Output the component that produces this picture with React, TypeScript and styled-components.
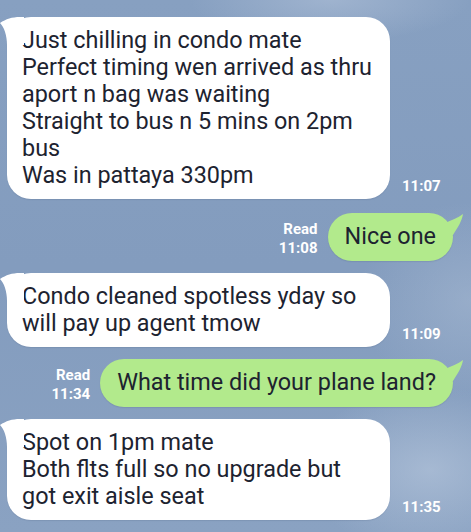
import React from "react";
import styled, { createGlobalStyle } from "styled-components";

const Global = createGlobalStyle`
  html, body { margin: 0; padding: 0; }
  body {
    width: 471px;
    height: 532px;
    overflow: hidden;
    font-family: Roboto, "Noto Sans", "Liberation Sans", sans-serif;
  }
`;

const Screen = styled.div`
  box-sizing: border-box;
  width: 471px;
  height: 532px;
  padding-top: 17px;
  display: flex;
  flex-direction: column;
  gap: 12px;
  background:
    radial-gradient(ellipse 180px 120px at 430px 470px, rgba(190, 205, 225, 0.55), rgba(190, 205, 225, 0) 70%),
    radial-gradient(ellipse 200px 60px at 330px 0px, rgba(175, 192, 216, 0.6), rgba(175, 192, 216, 0) 70%),
    radial-gradient(ellipse 160px 140px at 470px 300px, rgba(170, 188, 212, 0.5), rgba(170, 188, 212, 0) 70%),
    linear-gradient(180deg, #87a0c1 0%, #839cbe 50%, #8aa2c2 100%);
`;

const Row = styled.div<{ $out?: boolean; $extra?: number }>`
  display: flex;
  align-items: flex-end;
  justify-content: ${(p) => (p.$out ? "flex-end" : "flex-start")};
  gap: ${(p) => (p.$out ? "10px" : "12px")};
  padding: ${(p) => (p.$out ? "0 18px 0 0" : "0 0 0 7px")};
  margin-bottom: ${(p) => p.$extra ?? 0}px;
`;

const Bubble = styled.div<{ $out?: boolean }>`
  position: relative;
  box-sizing: border-box;
  width: ${(p) => (p.$out ? "auto" : "383px")};
  padding: ${(p) => (p.$out ? "10px 17px 11px 17px" : "10px 14px 10px 15px")};
  border-radius: 24px;
  background: ${(p) => (p.$out ? "#b2ea8c" : "#ffffff")};
  color: #1d2330;
  font-size: 23.4px;
  line-height: 27px;
  white-space: pre-line;
  box-shadow: 0 1px 1px rgba(40, 60, 90, 0.12);
`;

const Tail = styled.svg<{ $out?: boolean }>`
  position: absolute;
  top: 0;
  ${(p) => (p.$out ? "right: -10px;" : "left: -7px;")}
  overflow: visible;
`;

const Meta = styled.div<{ $out?: boolean }>`
  display: flex;
  flex-direction: column;
  align-items: flex-end;
  padding-bottom: 3px;
  color: #ffffff;
  font-size: 15px;
  font-weight: 700;
  line-height: 19px;
`;

type Msg = { text: string; out?: boolean; time: string; read?: boolean; extra?: number };

const messages: Msg[] = [
  {
    text: "Just chilling in condo mate\nPerfect timing wen arrived as thru\naport n bag was waiting\nStraight to bus n 5 mins on 2pm\nbus\nWas in pattaya 330pm",
    time: "11:07",
    extra: 2,
  },
  { text: "Nice one", out: true, time: "11:08", read: true },
  { text: "Condo cleaned spotless yday so\nwill pay up agent tmow", time: "11:09" },
  { text: "What time did your plane land?", out: true, time: "11:34", read: true },
  { text: "Spot on 1pm mate\nBoth flts full so no upgrade but\ngot exit aisle seat", time: "11:35" },
];

function InTail() {
  return (
    <Tail width="24" height="28" viewBox="0 0 24 28">
      <path d="M0 6 C6 2 12 0 20 0 L24 0 L24 28 L7 28 C7 18 4 10 0 6 Z" fill="#ffffff" />
    </Tail>
  );
}

function OutTail() {
  return (
    <Tail $out width="22" height="24" viewBox="0 0 22 24">
      <path d="M4 10 C10 7 17 5 22 1 C21 8 17 14 12 22 L0 22 L0 10 Z" fill="#b2ea8c" />
    </Tail>
  );
}

export default function App() {
  return (
    <>
      <Global />
      <Screen>
        {messages.map((m, i) =>
          m.out ? (
            <Row key={i} $out $extra={m.extra}>
              <Meta $out>
                {m.read && <span>Read</span>}
                <span>{m.time}</span>
              </Meta>
              <Bubble $out>
                <OutTail />
                {m.text}
              </Bubble>
            </Row>
          ) : (
            <Row key={i} $extra={m.extra}>
              <Bubble>
                <InTail />
                {m.text}
              </Bubble>
              <Meta>
                <span>{m.time}</span>
              </Meta>
            </Row>
          )
        )}
      </Screen>
    </>
  );
}
